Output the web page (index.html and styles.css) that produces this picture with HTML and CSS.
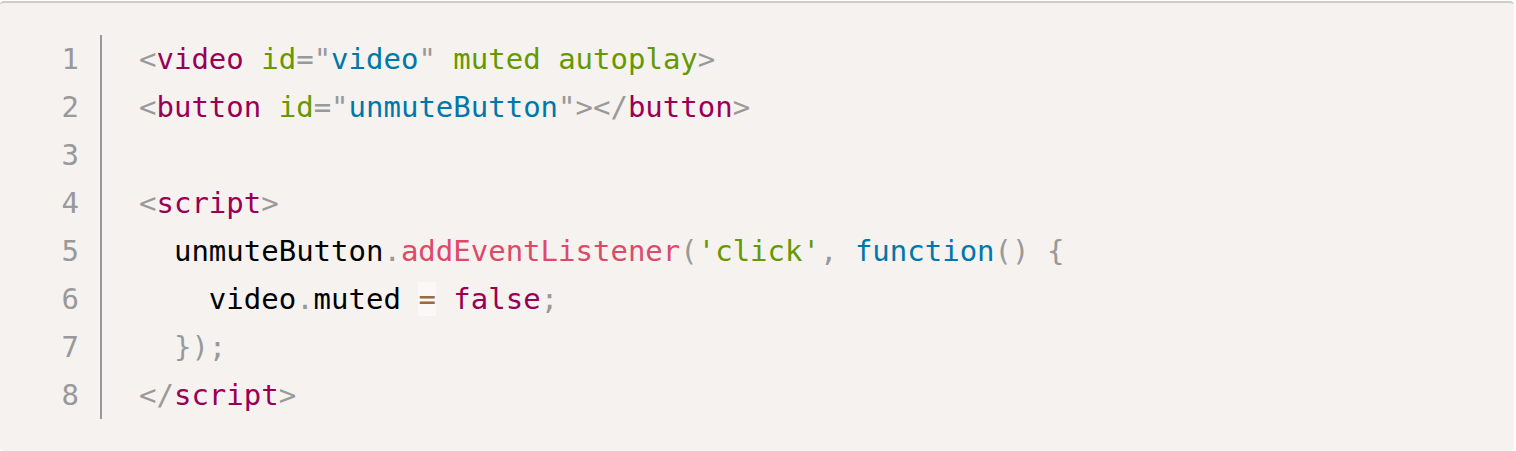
FILE: index.html
```html
<!DOCTYPE html>
<html>
<head>
<meta charset="utf-8">
<link rel="stylesheet" href="styles.css">
</head>
<body>
<div class="code-block">
<div class="gutter"><span>1</span><span>2</span><span>3</span><span>4</span><span>5</span><span>6</span><span>7</span><span>8</span></div>
<pre class="code"><code><span class="p">&lt;</span><span class="tag">video</span> <span class="attr">id</span><span class="p">="</span><span class="val">video</span><span class="p">"</span> <span class="attr">muted</span> <span class="attr">autoplay</span><span class="p">&gt;</span>
<span class="p">&lt;</span><span class="tag">button</span> <span class="attr">id</span><span class="p">="</span><span class="val">unmuteButton</span><span class="p">"&gt;&lt;/</span><span class="tag">button</span><span class="p">&gt;</span>

<span class="p">&lt;</span><span class="tag">script</span><span class="p">&gt;</span>
  unmuteButton<span class="p">.</span><span class="fn">addEventListener</span><span class="p">(</span><span class="str">'click'</span><span class="p">,</span> <span class="kw">function</span><span class="p">()</span> <span class="p">{</span>
    video<span class="p">.</span>muted <span class="op">=</span> <span class="bool">false</span><span class="p">;</span>
  <span class="p">});</span>
<span class="p">&lt;/</span><span class="tag">script</span><span class="p">&gt;</span></code></pre>
</div>
</body>
</html>
```
FILE: styles.css
```css
html, body {
  margin: 0;
  padding: 0;
  background: #ffffff;
}
body {
  padding-top: 1px;
}
.code-block {
  width: 1514px;
  box-sizing: border-box;
  display: flex;
  align-items: flex-start;
  background: #f5f2f0;
  border-top: 2px solid #cccccc;
  border-radius: 4px;
  padding: 32px 0;
  font-family: "DejaVu Sans Mono", "Liberation Mono", monospace;
  font-size: 29px;
  line-height: 48px;
}
.gutter {
  display: flex;
  flex-direction: column;
  align-items: flex-end;
  width: 79px;
  padding-right: 21px;
  border-right: 2px solid #999999;
  color: #999999;
}
.code {
  margin: 0;
  padding-left: 37px;
  font: inherit;
  color: #000000;
  white-space: pre;
}
.code code {
  font: inherit;
}
.p { color: #999999; }
.tag { color: #990055; }
.attr { color: #669900; }
.val { color: #0077aa; }
.str { color: #669900; }
.fn { color: #dd4a68; }
.kw { color: #0077aa; }
.bool { color: #990055; }
.op {
  color: #9a6e3a;
  background: rgba(255, 255, 255, 0.5);
}
```
